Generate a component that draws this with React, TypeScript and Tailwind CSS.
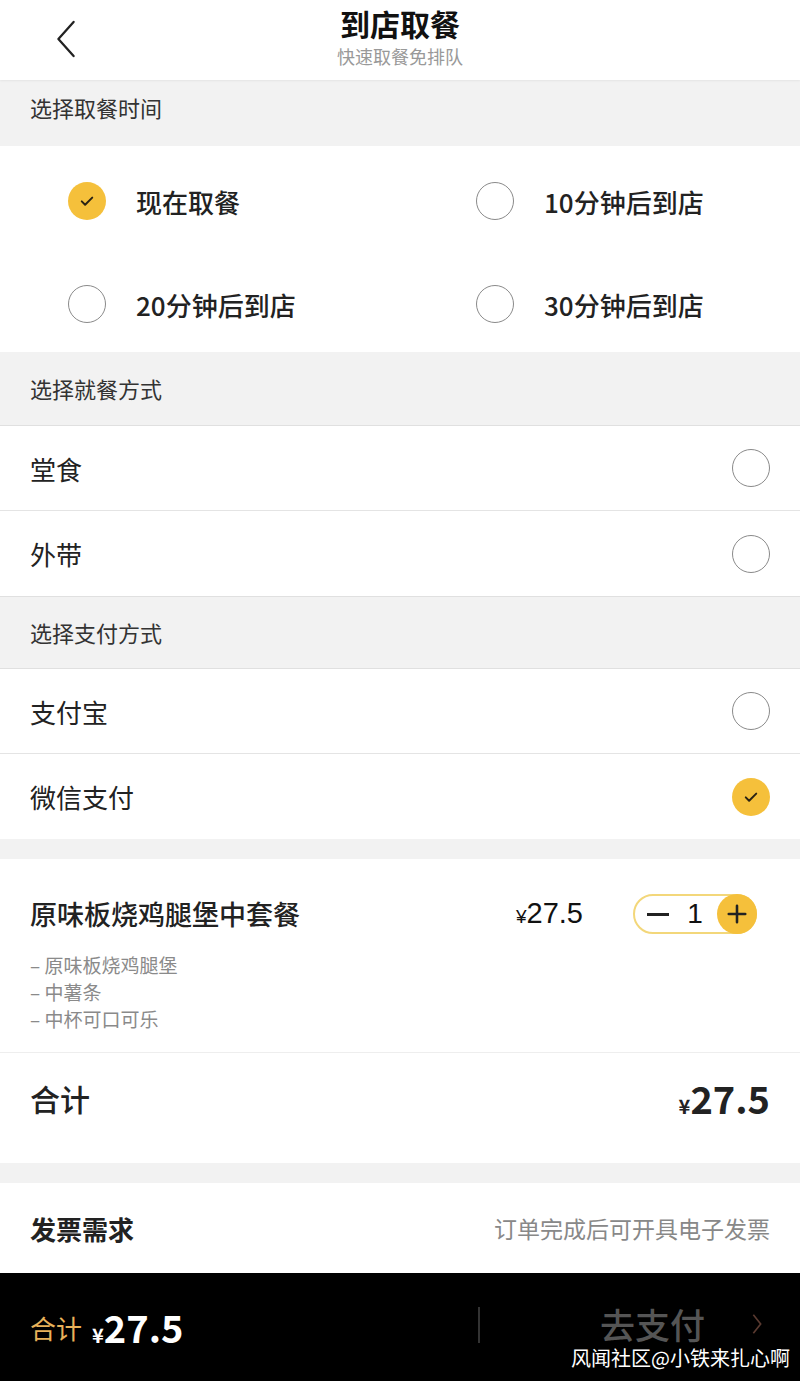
import React, { useState } from "react";

const font = { fontFamily: '"Noto Sans CJK SC", "Noto Sans", sans-serif' };
const latin = { fontFamily: '"Liberation Sans", Arial, sans-serif' };

function Radio({ checked }: { checked: boolean }) {
  if (checked) {
    return (
      <span className="flex h-[38px] w-[38px] shrink-0 items-center justify-center rounded-full bg-[#f5c03b]">
        <svg viewBox="0 0 24 24" className="h-[18px] w-[18px]" fill="none" stroke="#2a2214" strokeWidth="2.6" strokeLinecap="round" strokeLinejoin="round">
          <path d="M5 12.5l4.5 4.5L19 7.5" />
        </svg>
      </span>
    );
  }
  return <span className="block h-[38px] w-[38px] shrink-0 rounded-full border border-[#8a8a8a] bg-white" />;
}

function OptionRow({ label, checked, last }: { label: string; checked: boolean; last?: boolean }) {
  return (
    <div className={"flex h-[85px] items-center justify-between bg-white pl-[30px] pr-[30px] " + (last ? "" : "border-b border-[#e4e4e4]")}>
      <span className="text-[26px] text-[#222]">{label}</span>
      <Radio checked={checked} />
    </div>
  );
}

export default function App() {
  const [time, setTime] = useState(0);
  const [dine, setDine] = useState<number | null>(null);
  const [pay, setPay] = useState(1);
  const [qty, setQty] = useState(1);
  const times = ["现在取餐", "10分钟后到店", "20分钟后到店", "30分钟后到店"];

  return (
    <div style={font} className="flex min-h-screen w-[800px] flex-col bg-[#f2f2f2]">
      <header className="relative flex h-[80px] flex-col items-center bg-white shadow-[0_1px_2px_rgba(0,0,0,0.06)]">
        <svg viewBox="0 0 24 40" className="absolute left-[54px] top-[20px] h-[38px] w-[24px]" fill="none" stroke="#222" strokeWidth="2.4" strokeLinecap="round" strokeLinejoin="round">
          <path d="M20 2L4 20l16 18" />
        </svg>
        <h1 className="mt-[3px] text-[30px] font-bold leading-[40px] text-[#111]">到店取餐</h1>
        <p className="text-[18px] leading-[26px] text-[#999]">快速取餐免排队</p>
      </header>

      <div className="flex h-[66px] items-center pb-[12px] pl-[30px] text-[22px] text-[#333]">选择取餐时间</div>

      <div className="grid h-[206px] grid-cols-2 content-start gap-y-[65px] bg-white pt-[36px]">
        {times.map((t, i) => (
          <button
            key={t}
            onClick={() => setTime(i)}
            className={"flex h-[38px] items-center gap-[30px] " + (i % 2 === 0 ? "pl-[68px]" : "pl-[76px]")}
          >
            <Radio checked={time === i} />
            <span className="text-[26px] font-medium text-[#222]">{t}</span>
          </button>
        ))}
      </div>

      <div className="flex h-[74px] items-center border-b border-[#e0e0e0] pl-[30px] text-[22px] text-[#333]">选择就餐方式</div>
      <div onClick={() => setDine(0)}><OptionRow label="堂食" checked={dine === 0} /></div>
      <div onClick={() => setDine(1)}><OptionRow label="外带" checked={dine === 1} last /></div>

      <div className="flex h-[73px] items-center border-y border-[#e0e0e0] pl-[30px] text-[22px] text-[#333]">选择支付方式</div>
      <div onClick={() => setPay(0)}><OptionRow label="支付宝" checked={pay === 0} /></div>
      <div onClick={() => setPay(1)}><OptionRow label="微信支付" checked={pay === 1} last /></div>

      <div className="mt-[20px] bg-white pb-[20px] pl-[30px] pr-[43px] pt-[30px]">
        <div className="flex h-[50px] items-center">
          <span className="flex-1 text-[27px] font-medium text-[#222]">原味板烧鸡腿堡中套餐</span>
          <span className="mr-[50px] text-[29px] text-[#111]" style={latin}>
            <span className="text-[19px]">¥</span>27.5
          </span>
          <div className="flex h-[40px] w-[124px] items-center rounded-full border-2 border-[#f3d77a] pl-[8px]">
            <button onClick={() => setQty(Math.max(0, qty - 1))} className="flex h-full w-[30px] items-center justify-center">
              <span className="block h-[3px] w-[22px] bg-[#222]" />
            </button>
            <span className="flex-1 text-center text-[28px] leading-none text-[#111]" style={latin}>{qty}</span>
            <button onClick={() => setQty(qty + 1)} className="-mr-[2px] flex h-[40px] w-[40px] items-center justify-center rounded-full bg-[#f5c03b]">
              <svg viewBox="0 0 24 24" className="h-[22px] w-[22px]" fill="none" stroke="#222" strokeWidth="2.8" strokeLinecap="round">
                <path d="M12 3v18M3 12h18" />
              </svg>
            </button>
          </div>
        </div>
        <ul className="mt-[12px] text-[19px] leading-[27px] text-[#8a8a8a]">
          <li>– 原味板烧鸡腿堡</li>
          <li>– 中薯条</li>
          <li>– 中杯可口可乐</li>
        </ul>
      </div>

      <div className="h-[111px] border-t border-[#eeeeee] bg-white px-[30px]">
        <div className="flex h-[90px] items-center justify-between">
          <span className="text-[30px] font-medium text-[#222]">合计</span>
          <span className="font-bold leading-none text-[#222]">
            <span className="text-[20px]">¥</span>
            <span className="text-[38px]">27.5</span>
          </span>
        </div>
      </div>

      <div className="mt-[20px] flex h-[90px] items-center justify-between bg-white px-[30px]">
        <span className="text-[26px] font-bold text-[#222]">发票需求</span>
        <span className="text-[23px] text-[#888]">订单完成后可开具电子发票</span>
      </div>

      <footer className="relative flex h-[108px] items-center bg-black">
        <div className="flex flex-1 items-center pl-[30px]">
          <span className="text-[26px] text-[#e8b25a]">合计</span>
          <span className="ml-[10px] font-bold leading-none text-white">
            <span className="text-[20px]">¥</span>
            <span className="text-[38px]">27.5</span>
          </span>
        </div>
        <span className="mb-[4px] block h-[36px] w-[2px] bg-[#333]" />
        <div className="mb-[6px] flex w-[320px] items-center pl-[120px]">
          <span className="text-[35px] font-medium leading-[34px] text-[#555]">去支付</span>
          <svg viewBox="0 0 12 24" className="ml-[46px] h-[22px] w-[12px]" fill="none" stroke="#5a3a30" strokeWidth="1.8">
            <path d="M2 2l8 10-8 10" />
          </svg>
        </div>
        <span className="absolute bottom-[12px] right-[10px] text-[20px] leading-[22px] text-white">风闻社区@小铁来扎心啊</span>
      </footer>
    </div>
  );
}
